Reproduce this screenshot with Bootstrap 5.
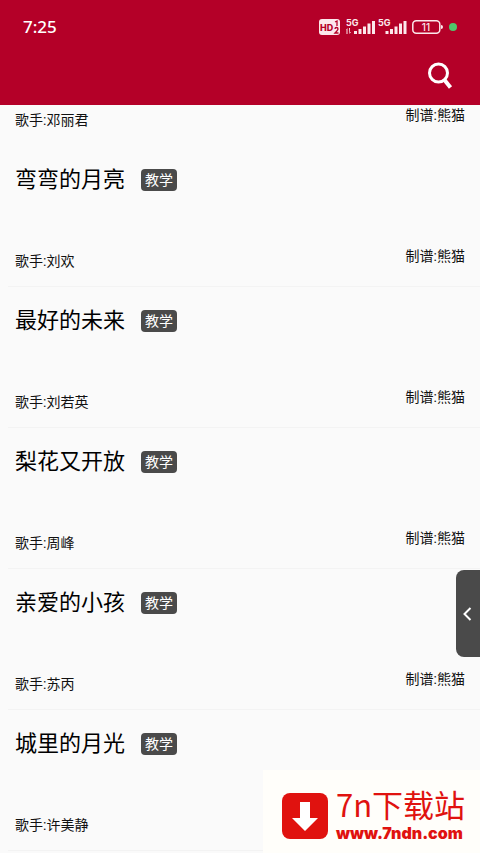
<!DOCTYPE html>
<html lang="zh-CN">
<head>
<meta charset="utf-8">
<meta name="viewport" content="width=device-width, initial-scale=1">
<title>歌曲列表</title>
<link href="https://cdn.jsdelivr.net/npm/bootstrap@5.3.0/dist/css/bootstrap.min.css" rel="stylesheet">
<style>
body { background: #fafafa; color: #111; font-family: Roboto, "Noto Sans CJK SC", sans-serif; font-size: 14px; line-height: 20px; }
.app-head { background: #b40028; }
.status { height: 54px; padding: 0 22px 0 23px; }
.clock { font: 500 17px/24px "Noto Sans", sans-serif; }
.tools { height: 51px; padding: 0 24px 8px; }
.songs { padding: 5px 0 0 8px; }
.song { height: 141px; padding: 20px 15px 15px 7px; border-bottom: 1px solid #f3f3f3; }
.song:first-child { border-color: transparent; }
.song-title { font-size: 22px; line-height: 28px; font-weight: 400; color: #000; }
.teach { background: #4a4a4a; border-radius: 4px; font-size: 14px; line-height: 22px; padding: 0 4px; font-weight: 400; }
.maker { padding-bottom: 5px; }
.drawer { top: 570px; width: 24px; height: 87px; background: #4a4a4a; border-radius: 8px 0 0 8px; z-index: 20; }
.brand { width: 217px; height: 83px; padding: 8px 12px 0 19px; background: #fffefa; color: #e0120f; z-index: 10; }
.brand-name { font: 400 31px/34px "Noto Sans CJK SC", sans-serif; }
.brand-site { font: 900 16px/24px Inter, "Open Sans", sans-serif; }
</style>
<script src="https://cdn.jsdelivr.net/npm/bootstrap@5.3.0/dist/js/bootstrap.bundle.min.js"></script>
</head>
<body>
<header class="app-head fixed-top text-white">
  <div class="status d-flex align-items-center justify-content-between">
    <span class="clock">7:25</span>
    <svg width="140" height="20" viewBox="318 17 140 20" role="img" aria-label="状态" fill="#fce8ec" font-family="Inter, sans-serif">
      <rect x="319" y="19" width="21" height="16" rx="3"/>
      <text x="320" y="31" font-size="9" font-weight="800" fill="#b40028">HD</text>
      <path d="M335 22l2-1v5M335 29q0-1.500 1.500-1.500T338 29q0 1-3 4h3.500" fill="none" stroke="#b40028" stroke-width="1.300"/>
      <text x="346" y="26" font-size="9" font-weight="700">5G</text>
      <text x="378" y="26" font-size="9" font-weight="700">5G</text>
      <path d="M346 30l1.500-2v6h-1v-4zM349 28h1v4h1l-1.500 2zM354 31h3v3H354zM358.500 29h3v5h-3zM363 26.500h3V34H363zM367.500 23.500h3v10.500h-3zM372 21h3v13H372zM385.500 31h3v3h-3zM390 29h3v5H390zM394.500 26.500h3V34h-3zM399 23.500h3V34H399zM403.500 21h3v13h-3z"/>
      <rect x="412.800" y="20.800" width="27" height="12.500" rx="3.500" fill="none" stroke="#fce8ec" stroke-width="1.500"/>
      <path d="M441 25q2 0 2 2t-2 2z"/>
      <text x="426" y="31" font-size="10" font-weight="500" text-anchor="middle">11</text>
      <circle cx="453" cy="27" r="4" fill="#4fc76c"/>
    </svg>
  </div>
  <div class="tools d-flex align-items-center justify-content-end">
    <button type="button" class="btn p-0 border-0 lh-1" aria-label="搜索">
      <svg width="32" height="32" viewBox="0 0 32 32" fill="none" stroke="#fff"><circle cx="14.500" cy="13" r="9" stroke-width="3"/><path d="M20.500 20l6 7.500" stroke-width="4"/></svg>
    </button>
  </div>
</header>

<main>
  <ul class="songs list-unstyled mb-0">
    <li class="song d-flex flex-column justify-content-end">
      <div class="d-flex justify-content-between align-items-end"><span>歌手:邓丽君</span><span class="maker">制谱:熊猫</span></div>
    </li>
    <li class="song d-flex flex-column justify-content-between">
      <div class="d-flex align-items-center gap-3"><h2 class="song-title mb-0">弯弯的月亮</h2><span class="badge teach">教学</span></div>
      <div class="d-flex justify-content-between align-items-end"><span>歌手:刘欢</span><span class="maker">制谱:熊猫</span></div>
    </li>
    <li class="song d-flex flex-column justify-content-between">
      <div class="d-flex align-items-center gap-3"><h2 class="song-title mb-0">最好的未来</h2><span class="badge teach">教学</span></div>
      <div class="d-flex justify-content-between align-items-end"><span>歌手:刘若英</span><span class="maker">制谱:熊猫</span></div>
    </li>
    <li class="song d-flex flex-column justify-content-between">
      <div class="d-flex align-items-center gap-3"><h2 class="song-title mb-0">梨花又开放</h2><span class="badge teach">教学</span></div>
      <div class="d-flex justify-content-between align-items-end"><span>歌手:周峰</span><span class="maker">制谱:熊猫</span></div>
    </li>
    <li class="song d-flex flex-column justify-content-between">
      <div class="d-flex align-items-center gap-3"><h2 class="song-title mb-0">亲爱的小孩</h2><span class="badge teach">教学</span></div>
      <div class="d-flex justify-content-between align-items-end"><span>歌手:苏丙</span><span class="maker">制谱:熊猫</span></div>
    </li>
    <li class="song d-flex flex-column justify-content-between">
      <div class="d-flex align-items-center gap-3"><h2 class="song-title mb-0">城里的月光</h2><span class="badge teach">教学</span></div>
      <div class="d-flex justify-content-between align-items-end"><span>歌手:许美静</span></div>
    </li>
  </ul>
</main>

<button type="button" class="drawer btn position-fixed end-0 p-0 border-0 d-flex align-items-center justify-content-center" aria-label="展开侧栏">
  <svg width="12" height="16" viewBox="0 0 12 16" fill="none" stroke="#fff" stroke-width="2"><path d="M8.500 2L2.500 8l6 6"/></svg>
</button>

<a href="#" class="brand position-fixed bottom-0 end-0 d-flex align-items-center text-decoration-none">
  <svg class="flex-shrink-0" width="46" height="46" viewBox="0 0 46 46"><rect width="46" height="46" rx="8" fill="#e0120f"/><path d="M18 9h10v16h8L23 38 10 25h8z" fill="#fff"/></svg>
  <span class="d-flex flex-column ps-2">
    <span class="brand-name text-nowrap">7n下载站</span>
    <span class="brand-site">www.7ndn.com</span>
  </span>
</a>
</body>
</html>
